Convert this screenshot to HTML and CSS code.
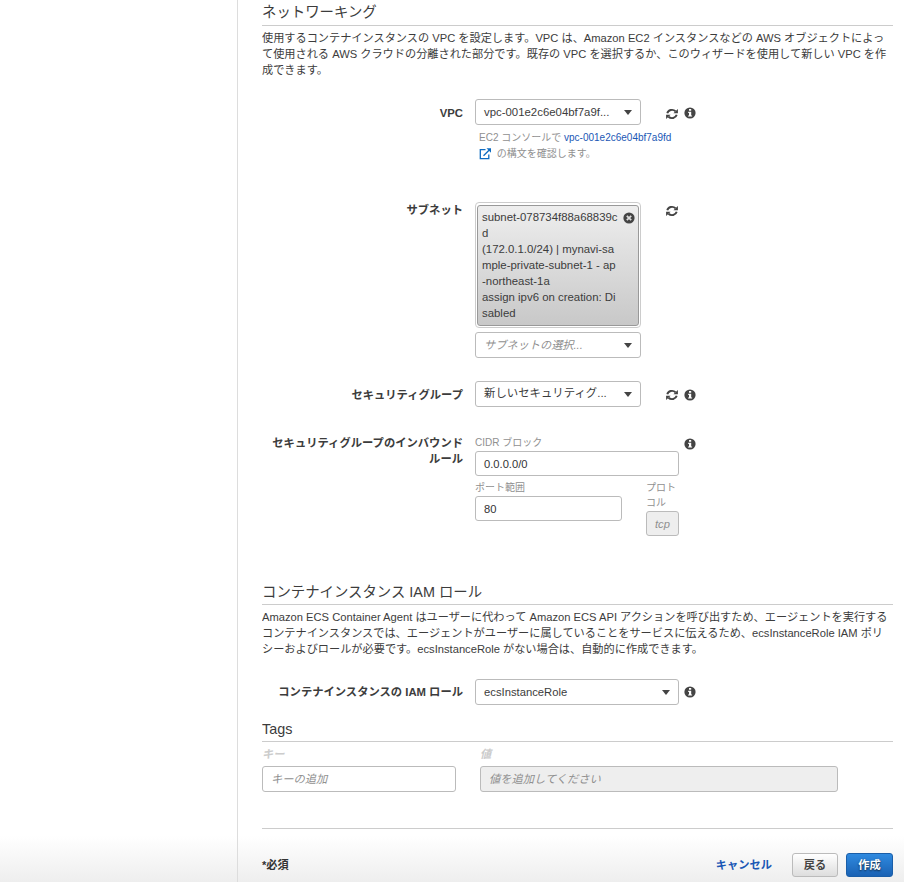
FILE: index.html
```html
<!DOCTYPE html>
<html lang="ja">
<head>
<meta charset="utf-8">
<title>クラスターの作成</title>
<link rel="stylesheet" href="styles.css">
</head>
<body>
<svg class="defs" width="0" height="0">
  <symbol id="refresh" viewBox="0 0 12 12"><path fill="none" stroke="currentColor" stroke-width="1.900" d="M1.300 5.200A4.800 4.200 0 0 1 9.500 3.200M10.700 6.800A4.800 4.200 0 0 1 2.500 8.800"/><path d="M11.900.900v4.400H7.400zM.100 11.100V6.700h4.500z"/></symbol>
  <symbol id="info" viewBox="0 0 12 12"><circle cx="6" cy="6" r="5.6"/><path fill="#fff" d="M5 2h2.200v1.700H5zM4.200 4.700h3v3.700h.9v1.200H4.100V8.400H5V5.900h-.8z"/></symbol>
  <symbol id="external" viewBox="0 0 13 12"><path fill="none" stroke="currentColor" stroke-width="1.300" d="M6.500 1.700H1.300v9h8.500V6.500M4.500 7.700 10 2.200"/><path d="M7.500.300H12v4.500z"/></symbol>
  <symbol id="remove" viewBox="0 0 12 12"><circle cx="6" cy="6" r="5.600"/><path stroke="#ddd" stroke-width="1.700" d="m3.800 3.800 4.400 4.400m0-4.400L3.800 8.200"/></symbol>
</svg>
<div class="page">
  <aside class="sidebar"></aside>
  <main class="main">
    <section class="networking">
      <h2>ネットワーキング</h2>
      <p><span>使用するコンテナインスタンスの VPC を設定します。VPC は、Amazon EC2 インスタンスなどの AWS オブジェクトによっ</span><span>て使用される AWS クラウドの分離された部分です。既存の VPC を選択するか、このウィザードを使用して新しい VPC を作</span><span>成できます。</span></p>
      <div class="row vpc">
        <label>VPC</label>
        <div class="control">
          <div class="select"><span>vpc-001e2c6e04bf7a9f...</span><i class="caret"></i></div>
          <div class="help"><span>EC2 コンソールで <a>vpc-001e2c6e04bf7a9fd</a></span><span><svg class="ext"><use href="#external"/></svg> の構文を確認します。</span></div>
        </div>
        <div class="icons"><svg class="refresh"><use href="#refresh"/></svg><svg class="info"><use href="#info"/></svg></div>
      </div>
      <div class="row subnet">
        <label>サブネット</label>
        <div class="control">
          <div class="tokens"><div class="token"><div>subnet-078734f88a68839c<br>d<br>(172.0.1.0/24) | mynavi-sa<br>mple-private-subnet-1 - ap<br>-northeast-1a<br>assign ipv6 on creation: Di<br>sabled</div><svg class="remove"><use href="#remove"/></svg></div></div>
          <div class="select placeholder"><span>サブネットの選択...</span><i class="caret"></i></div>
        </div>
        <div class="icons"><svg class="refresh"><use href="#refresh"/></svg></div>
      </div>
      <div class="row group">
        <label>セキュリティグループ</label>
        <div class="control"><div class="select raised"><span>新しいセキュリティグ...</span><i class="caret"></i></div></div>
        <div class="icons"><svg class="refresh"><use href="#refresh"/></svg><svg class="info"><use href="#info"/></svg></div>
      </div>
      <div class="row wide inbound">
        <label>セキュリティグループのインバウンド<br>ルール</label>
        <div class="control">
          <div class="caption">CIDR ブロック</div>
          <div class="input">0.0.0.0/0</div>
          <div class="ports">
            <div class="port"><div class="caption">ポート範囲</div><div class="input">80</div></div>
            <div class="protocol"><div class="caption">プロト<br>コル</div><div class="input disabled">tcp</div></div>
          </div>
        </div>
        <div class="icons"><svg class="info"><use href="#info"/></svg></div>
      </div>
    </section>
    <section class="iam">
      <h2>コンテナインスタンス IAM ロール</h2>
      <p><span>Amazon ECS Container Agent はユーザーに代わって Amazon ECS API アクションを呼び出すため、エージェントを実行する</span><span>コンテナインスタンスでは、エージェントがユーザーに属していることをサービスに伝えるため、ecsInstanceRole IAM ポリ</span><span>シーおよびロールが必要です。ecsInstanceRole がない場合は、自動的に作成できます。</span></p>
      <div class="row wide role">
        <label>コンテナインスタンスの IAM ロール</label>
        <div class="control"><div class="select"><span>ecsInstanceRole</span><i class="caret"></i></div></div>
        <div class="icons"><svg class="info"><use href="#info"/></svg></div>
      </div>
    </section>
    <section class="tags">
      <h2>Tags</h2>
      <div class="tag-grid">
        <div class="tag-label">キー</div><div class="tag-label">値</div>
        <div class="input tag-input">キーの追加</div><div class="input tag-input disabled">値を追加してください</div>
      </div>
    </section>
    <footer>
      <span class="required">*必須</span>
      <a class="cancel">キャンセル</a>
      <button class="back">戻る</button>
      <button class="create">作成</button>
    </footer>
  </main>
</div>
</body>
</html>
```
FILE: styles.css
```css
* { box-sizing: border-box; }
html, body { margin: 0; height: 882px; overflow: hidden; }
body {
  background: #fff linear-gradient(to bottom, rgba(238,238,238,0), #eee) bottom / 100% 46px no-repeat;
  color: #3c3c3c;
  font: 11.18px/16px "Liberation Sans", "Noto Sans CJK JP", sans-serif;
}
.defs { display: block; width: 0; height: 0; }
svg { fill: currentColor; flex: none; display: block; color: #444; }
.page { display: flex; height: 882px; }
.sidebar { width: 238px; flex: none; border-right: 1px solid #ddd; }
.main { width: 655px; flex: none; padding-left: 24px; }
section { overflow: hidden; }
h2 {
  margin: 0; height: 26px; border-bottom: 1px solid #ccc;
  font-size: 14.4px; font-weight: 400; line-height: 24px; white-space: nowrap;
}
p { margin: 4px 0 0; height: 48px; }
p span { display: block; white-space: nowrap; }
.networking { height: 580px; }
.row { display: grid; grid-template-columns: 201px 166px auto; column-gap: 12px; white-space: nowrap; }
.row.wide { grid-template-columns: 201px 204px auto; }
label { font-size: 11.3px; font-weight: 700; text-align: right; padding-top: 6px; }
.icons { display: flex; align-items: flex-start; gap: 6px; padding: 8px 0 0 13px; }
.wide .icons { padding-left: 0; margin-left: -7px; }
.refresh { width: 12px; height: 12px; margin-top: 1px; }
.group .refresh { margin-top: 0; }
.info { width: 12px; height: 12px; }
.vpc { margin-top: 21px; height: 103px; }
.subnet { height: 179px; }
.group { height: 54px; }
.subnet label { padding-top: 0; }
.subnet .icons { padding-top: 2px; }
.select {
  display: flex; align-items: center; justify-content: space-between;
  height: 26px; padding: 0 8px; border: 1px solid #bbb; border-radius: 3px; background: #fff;
  font-size: 11.4px;
}
.raised span { margin-top: -3px; }
.role .select { font-size: 11.25px; }
.placeholder { font-style: italic; font-size: 11.2px; color: #909090; margin-top: 4px; }
.caret { border: 4.500px solid transparent; border-top: 5px solid #444; border-bottom: 0; }
.help { padding: 5px 0 0 4px; color: #909090; font-size: 10px; }
.help span { display: flex; align-items: center; white-space: pre; }
.help a, .cancel { color: #1a57b5; }
.ext { width: 13px; height: 12px; margin-right: 2px; color: #0d6bc1; }
.tokens { height: 126px; padding: 2px 1px 1px; border: 1px solid #ccc; border-radius: 4px; }
.help + .tokens { margin-top: 0; }
.token {
  display: flex; justify-content: space-between; height: 121px; padding: 3px 3px 0 4px;
  border: 1px solid #999; border-radius: 3px; background: linear-gradient(#eee, #c8c8c8);
  font-size: 11.4px;
}
.remove { width: 12px; height: 12px; margin: 3px 0 0; }
.caption { color: #909090; font-size: 10px; line-height: 15px; }
.input {
  height: 25px; line-height: 25px; padding: 0 8px; color: #333;
  border: 1px solid #bbb; border-radius: 3px; background: #fff;
}
.disabled { background: #eee; color: #909090; font-style: italic; }
.inbound label { padding-top: 0; }
.inbound .icons { padding-top: 3px; }
.inbound .control > .caption { height: 16px; }
.ports { display: flex; justify-content: space-between; padding-top: 4px; }
.port { width: 147px; }
.port .caption { height: 16px; }
.protocol { width: 33px; }
.protocol .caption { height: 31px; }
.iam { height: 137px; }
.iam h2 { height: 25px; }
.role { margin-top: 22px; }
.role .icons { padding-top: 7px; }
.role label { padding-top: 5px; }
.tags { height: 112px; border-bottom: 1px solid #ccc; }
.tags h2 { height: 25px; }
.tag-grid { display: grid; grid-template-columns: 194px 358px; column-gap: 24px; grid-template-rows: 24px 26px; }
.tag-label { line-height: 24px; font-style: italic; font-weight: 700; color: #ccc; }
.tag-input { height: 26px; font-style: italic; color: #909090; font-size: 11.25px; }
footer { display: flex; align-items: center; height: 24px; margin-top: 24px; font-weight: 700; }
.required { margin-right: auto; color: #333; }
.cancel { margin-right: 20px; font-size: 11.25px; }
button { height: 24px; padding: 0; border-radius: 3px; font: inherit; }
.back { width: 46px; margin-right: 8px; color: #444; border: 1px solid #bbb; background: linear-gradient(#fff, #ddd); }
.create { width: 47px; color: #fff; border: 1px solid #1a5ea8; background: linear-gradient(#2f8ae0, #1a62b4); text-shadow: 0 1px 2px #123; }
```
